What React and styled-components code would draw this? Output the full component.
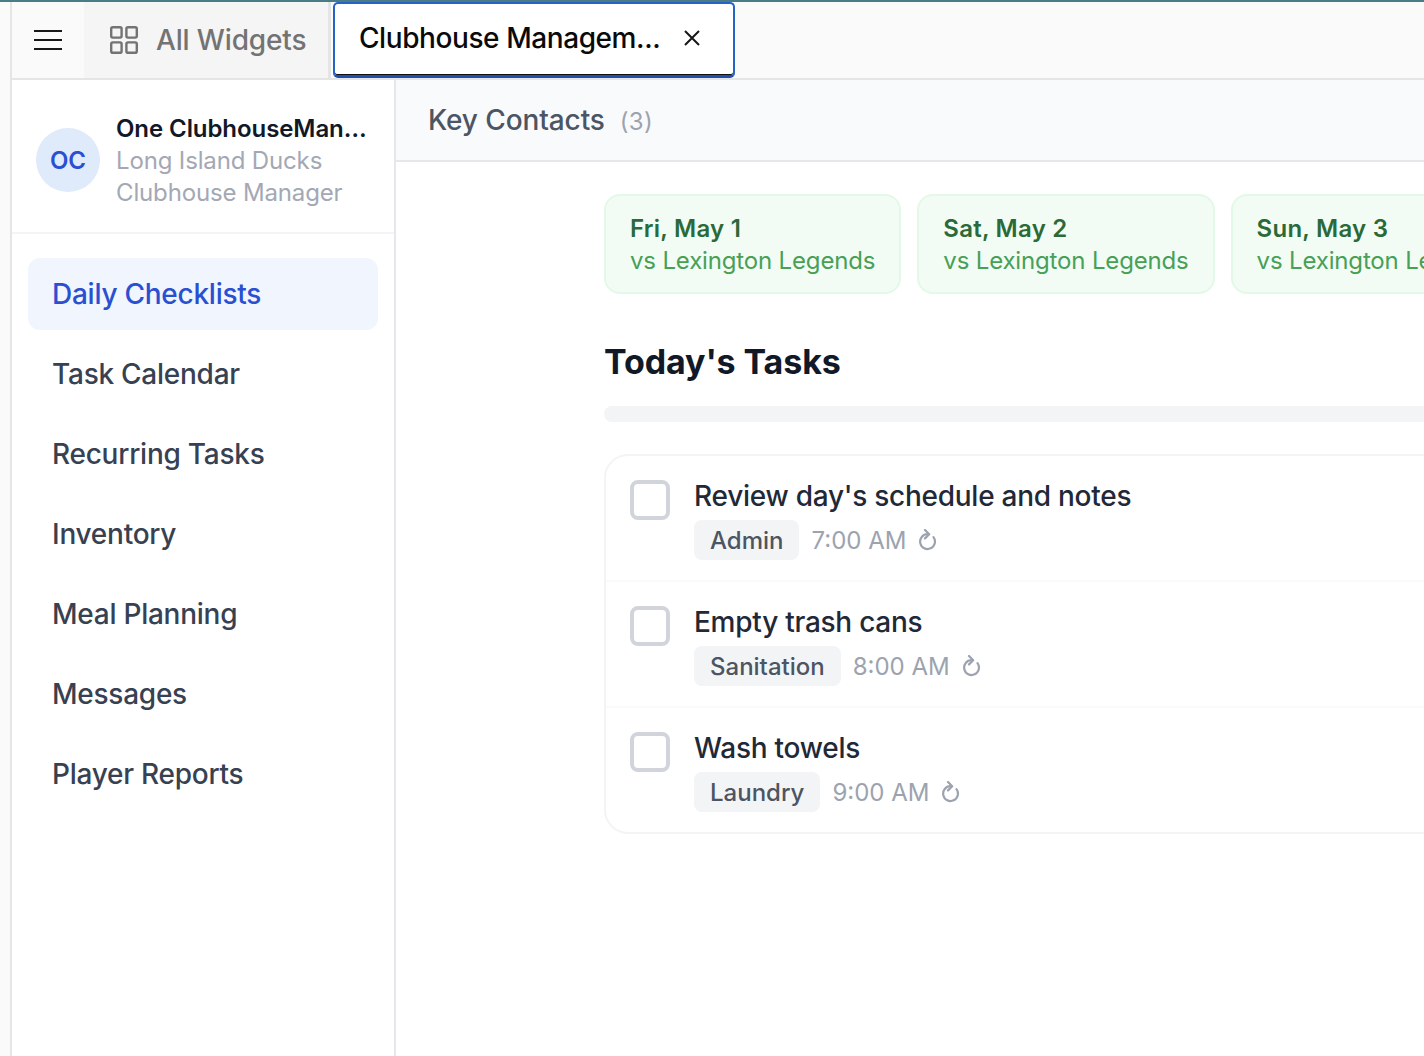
import React from 'react';
import styled, { createGlobalStyle } from 'styled-components';

const GlobalStyle = createGlobalStyle`
  html, body {
    margin: 0;
    height: 100%;
    overflow: hidden;
    background: #fff;
  }
  body {
    font-family: Inter, "Liberation Sans", sans-serif;
    -webkit-font-smoothing: antialiased;
  }
  * {
    box-sizing: border-box;
  }
`;

const Shell = styled.div`
  width: 1424px;
  height: 1056px;
  display: flex;
  flex-direction: column;
  border-top: 2px solid #4a7c85;
  padding-left: 10px;
  background: #fafafa;
`;

const Frame = styled.div`
  flex: 1;
  min-height: 0;
  display: flex;
  flex-direction: column;
  border-left: 2px solid #e5e5e5;
`;

const TopBar = styled.header`
  height: 78px;
  flex-shrink: 0;
  display: flex;
  background: #fafafa;
  border-bottom: 2px solid #e5e5e5;
`;

const MenuButton = styled.button`
  width: 72px;
  border: none;
  background: transparent;
  display: flex;
  align-items: center;
  justify-content: center;
  padding: 0;
`;

const WidgetsTab = styled.div`
  width: 247px;
  display: flex;
  align-items: center;
  gap: 18px;
  padding-left: 26px;
  background: #f5f5f5;
  border-right: 3px solid #e5e5e5;
  color: #737373;
  font-size: 28px;
  font-weight: 500;
  letter-spacing: -0.15px;
`;

const ActiveTab = styled.div`
  width: 402px;
  height: 76px;
  margin-left: 2px;
  display: flex;
  align-items: center;
  padding: 0 0 4px 24px;
  background: #fff;
  border: 2px solid #2563c9;
  border-bottom: 3px solid #1e4fae;
  border-radius: 5px;
  box-shadow: inset 0 -1px 0 #111;
  color: #0a0a0a;
  font-size: 28px;
  font-weight: 500;
  letter-spacing: -0.42px;
  svg {
    margin-left: 23px;
  }
`;

const Body = styled.div`
  flex: 1;
  min-height: 0;
  display: flex;
  background: #fff;
`;

const Sidebar = styled.aside`
  width: 384px;
  flex-shrink: 0;
  border-right: 2px solid #e5e7eb;
`;

const Profile = styled.div`
  height: 154px;
  display: flex;
  align-items: center;
  gap: 16px;
  padding: 8px 0 0 24px;
  border-bottom: 2px solid #f3f4f6;
`;

const Avatar = styled.div`
  width: 64px;
  height: 64px;
  flex-shrink: 0;
  border-radius: 50%;
  background: #dfeafb;
  color: #2a4fd1;
  display: flex;
  align-items: center;
  justify-content: center;
  font-size: 24px;
  font-weight: 600;
`;

const ProfileText = styled.div`
  min-width: 0;
  padding-top: 2px;
  line-height: 32px;
`;

const ProfileName = styled.div`
  width: 252px;
  overflow: hidden;
  white-space: nowrap;
  text-overflow: ellipsis;
  color: #111827;
  font-size: 24px;
  font-weight: 600;
  letter-spacing: -0.08px;
`;

const ProfileMeta = styled.div`
  color: #a3a8b4;
  font-size: 24px;
  letter-spacing: -0.15px;
`;

const Nav = styled.nav`
  display: flex;
  flex-direction: column;
  gap: 8px;
  padding: 24px 16px;
`;

const NavItem = styled.a`
  height: 72px;
  display: flex;
  align-items: center;
  padding-left: 24px;
  border-radius: 12px;
  font-size: 28px;
  font-weight: 500;
  letter-spacing: -0.25px;
  color: ${(props) => (props.$active ? '#2a4fd1' : '#374151')};
  background: ${(props) => (props.$active ? '#f0f5fe' : 'transparent')};
`;

const Main = styled.main`
  flex: 1;
  min-width: 0;
  overflow: hidden;
`;

const ContactsBar = styled.div`
  height: 82px;
  display: flex;
  align-items: center;
  gap: 15px;
  padding-left: 32px;
  background: #f9fafb;
  border-bottom: 2px solid #e5e7eb;
`;

const ContactsTitle = styled.span`
  color: #4b5563;
  font-size: 28px;
  font-weight: 500;
  letter-spacing: -0.1px;
`;

const ContactsCount = styled.span`
  color: #9ca3af;
  font-size: 24px;
  padding-top: 2px;
  letter-spacing: 0.3px;
`;

const Content = styled.div`
  width: 1400px;
  padding: 32px 0 0 208px;
`;

const Games = styled.div`
  display: flex;
  gap: 16px;
`;

const GameCard = styled.div`
  flex: 0 0 auto;
  height: 100px;
  padding: 17px 24px 0;
  background: #f2fcf5;
  border: 2px solid #e3f9e8;
  border-radius: 16px;
  font-size: 24px;
  line-height: 32px;
  white-space: nowrap;
`;

const GameDate = styled.div`
  color: #2b6a38;
  font-weight: 600;
  letter-spacing: 0.25px;
`;

const GameOpponent = styled.div`
  color: #47a056;
  letter-spacing: -0.16px;
`;

const Heading = styled.h2`
  margin: 46px 0 0;
  color: #111827;
  font-size: 34px;
  line-height: 44px;
  font-weight: 700;
  letter-spacing: -0.1px;
`;

const Progress = styled.div`
  height: 16px;
  margin-top: 22px;
  border-radius: 8px;
  background: #f3f4f6;
`;

const TaskList = styled.div`
  margin-top: 32px;
  border: 2px solid #f3f4f6;
  border-radius: 24px;
`;

const TaskRow = styled.div`
  height: 124px;
  display: flex;
  gap: 24px;
  padding: 24px 24px 0;
  & + & {
    height: 126px;
    border-top: 2px solid #f9fafb;
  }
`;

const Checkbox = styled.div`
  width: 40px;
  height: 40px;
  flex-shrink: 0;
  border: 4px solid #d1d5db;
  border-radius: 8px;
`;

const TaskBody = styled.div`
  display: flex;
  flex-direction: column;
`;

const TaskTitle = styled.div`
  height: 40px;
  color: #1f2937;
  font-size: 28px;
  line-height: 32px;
  font-weight: 500;
  letter-spacing: -0.26px;
`;

const TaskMeta = styled.div`
  display: flex;
  align-items: center;
  gap: 12px;
`;

const Tag = styled.span`
  height: 40px;
  display: flex;
  align-items: center;
  padding: 0 16px;
  border-radius: 8px;
  background: #f3f4f6;
  color: #4b5563;
  font-size: 24px;
  font-weight: 500;
`;

const Time = styled.span`
  color: #9ca3af;
  font-size: 24px;
`;

const MenuIcon = () => (
  <svg width="28" height="20" viewBox="0 0 28 20" fill="none" stroke="#171717" strokeWidth="2">
    <path d="M0 1h28M0 10h28M0 19h28" />
  </svg>
);

const WidgetsIcon = () => (
  <svg width="28" height="28" viewBox="0 0 28 28" fill="none" stroke="#737373" strokeWidth="2.4">
    <rect x="1.2" y="1.2" width="10.4" height="10.4" rx="1.6" />
    <rect x="16.4" y="1.2" width="10.4" height="10.4" rx="1.6" />
    <rect x="1.2" y="16.4" width="10.4" height="10.4" rx="1.6" />
    <rect x="16.4" y="16.4" width="10.4" height="10.4" rx="1.6" />
  </svg>
);

const CloseIcon = () => (
  <svg width="18" height="18" viewBox="0 0 18 18" fill="none" stroke="#171717" strokeWidth="2">
    <path d="M2 2l14 14M16 2L2 16" />
  </svg>
);

const RepeatIcon = () => (
  <svg width="20" height="22" viewBox="0 0 20 22" fill="none" stroke="#9ca3af" strokeWidth="2.2" strokeLinecap="round" strokeLinejoin="round">
    <path d="M9.5 5.2a7.4 7.4 0 1 0 6 3" />
    <path d="M7 1l4.2 4.2L7 9.4" />
  </svg>
);

const navItems = [
  'Daily Checklists',
  'Task Calendar',
  'Recurring Tasks',
  'Inventory',
  'Meal Planning',
  'Messages',
  'Player Reports',
];

const games = [
  { date: 'Fri, May 1', opponent: 'vs Lexington Legends' },
  { date: 'Sat, May 2', opponent: 'vs Lexington Legends' },
  { date: 'Sun, May 3', opponent: 'vs Lexington Legends' },
];

const tasks = [
  { title: "Review day's schedule and notes", tag: 'Admin', time: '7:00 AM' },
  { title: 'Empty trash cans', tag: 'Sanitation', time: '8:00 AM' },
  { title: 'Wash towels', tag: 'Laundry', time: '9:00 AM' },
];

const App = () => (
  <>
    <GlobalStyle />
    <Shell>
      <Frame>
        <TopBar>
          <MenuButton>
            <MenuIcon />
          </MenuButton>
          <WidgetsTab>
            <WidgetsIcon />
            All Widgets
          </WidgetsTab>
          <ActiveTab>
            Clubhouse Managem...
            <CloseIcon />
          </ActiveTab>
        </TopBar>
        <Body>
          <Sidebar>
            <Profile>
              <Avatar>OC</Avatar>
              <ProfileText>
                <ProfileName>One ClubhouseManager</ProfileName>
                <ProfileMeta>Long Island Ducks</ProfileMeta>
                <ProfileMeta>Clubhouse Manager</ProfileMeta>
              </ProfileText>
            </Profile>
            <Nav>
              {navItems.map((item, i) => (
                <NavItem key={item} $active={i === 0}>
                  {item}
                </NavItem>
              ))}
            </Nav>
          </Sidebar>
          <Main>
            <ContactsBar>
              <ContactsTitle>Key Contacts</ContactsTitle>
              <ContactsCount>(3)</ContactsCount>
            </ContactsBar>
            <Content>
              <Games>
                {games.map((game) => (
                  <GameCard key={game.date}>
                    <GameDate>{game.date}</GameDate>
                    <GameOpponent>{game.opponent}</GameOpponent>
                  </GameCard>
                ))}
              </Games>
              <Heading>Today's Tasks</Heading>
              <Progress />
              <TaskList>
                {tasks.map((task) => (
                  <TaskRow key={task.title}>
                    <Checkbox />
                    <TaskBody>
                      <TaskTitle>{task.title}</TaskTitle>
                      <TaskMeta>
                        <Tag>{task.tag}</Tag>
                        <Time>{task.time}</Time>
                        <RepeatIcon />
                      </TaskMeta>
                    </TaskBody>
                  </TaskRow>
                ))}
              </TaskList>
            </Content>
          </Main>
        </Body>
      </Frame>
    </Shell>
  </>
);

export default App;
